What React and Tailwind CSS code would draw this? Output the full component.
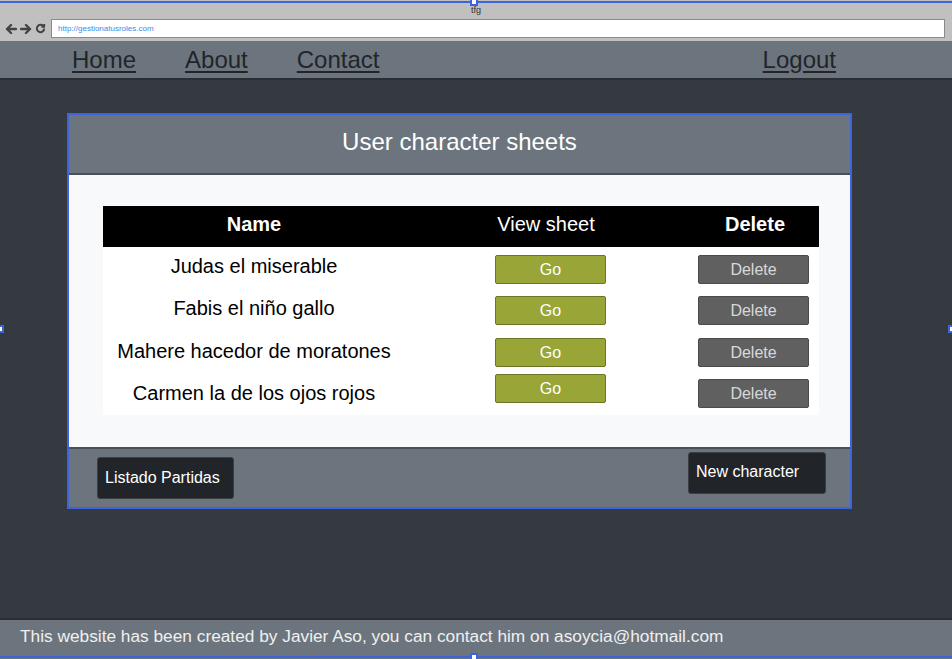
import React from "react";

const characters = [
  { name: "Judas el miserable", go: "mt-[8px]", del: "mt-[8px]", text: "pt-[4px]" },
  { name: "Fabis el niño gallo", go: "mt-[7px]", del: "mt-[7px]", text: "pt-[4px]" },
  { name: "Mahere hacedor de moratones", go: "mt-[7px]", del: "mt-[7px]", text: "pt-[5px]" },
  { name: "Carmen la de los ojos rojos", go: "mt-[1px]", del: "mt-[6px]", text: "pt-[5px]" },
];

const Handle = ({ className }) => (
  <div className={"absolute w-[8px] h-[8px] bg-white border-2 border-[#3d63dd] " + className} />
);

const App = () => {
  return (
    <div
      className="relative w-[952px] h-[659px] overflow-hidden bg-[#343a40] flex flex-col"
      style={{ fontFamily: '"Liberation Sans", Arial, sans-serif' }}
    >
      {/* selection frame of the mockup */}
      <div className="absolute left-0 right-0 top-[1px] h-[2px] bg-[#3d63dd] z-10" />
      <div className="absolute left-0 right-0 bottom-[1px] h-[2px] bg-[#3d63dd] z-10" />
      <Handle className="left-[470px] -top-[2px] z-20" />
      <Handle className="left-[470px] -bottom-[2px] z-20" />
      <Handle className="-left-[4px] top-[325px] z-20" />
      <Handle className="-right-[4px] top-[325px] z-20" />

      {/* browser chrome */}
      <div className="h-[41px] bg-[#c0c0c0] flex flex-col shrink-0">
        <div className="h-[19px] flex items-end justify-center text-[9px] text-[#333] leading-none pb-[4px]">tfg</div>
        <div className="flex items-center h-[19px]">
          <div className="flex items-center gap-[3px] pl-[5px] w-[51px]">
            <svg width="12" height="12" viewBox="0 0 12 12" fill="none" stroke="#444" strokeWidth="2.4" strokeLinecap="round" strokeLinejoin="round">
              <path d="M11 6H2M6 2L2 6l4 4" />
            </svg>
            <svg width="12" height="12" viewBox="0 0 12 12" fill="none" stroke="#444" strokeWidth="2.4" strokeLinecap="round" strokeLinejoin="round">
              <path d="M1 6h9M6 2l4 4-4 4" />
            </svg>
            <svg width="11" height="11" viewBox="0 0 12 12" fill="none" stroke="#444" strokeWidth="2.2">
              <path d="M10 6a4 4 0 1 1-1.2-2.9" />
              <path d="M10 1v3H7" strokeLinejoin="round" />
            </svg>
          </div>
          <div className="w-[894px] h-[19px] bg-white border border-[#8a8a8a] flex items-center pl-[6px] text-[8px] text-[#3d8be8]">
            http://gestionatusroles.com
          </div>
        </div>
      </div>

      {/* nav */}
      <nav className="h-[39px] bg-[#6c757d] border-b-2 border-[#2a2e33] flex items-center justify-between pl-[72px] pr-[116px] shrink-0">
        <div className="flex items-center gap-[49px] text-[24px] text-[#212529]">
          <a className="underline underline-offset-[3px]">Home</a>
          <a className="underline underline-offset-[3px]">About</a>
          <a className="underline underline-offset-[3px]">Contact</a>
        </div>
        <a className="text-[24px] text-[#212529] underline underline-offset-[3px]">Logout</a>
      </nav>

      {/* main */}
      <main className="flex-1 pt-[33px] pl-[67px]">
        <div className="w-[785px] border-2 border-[#3d63dd] flex flex-col">
          <div className="h-[60px] bg-[#6c757d] border-b-2 border-[#4a5056] flex items-center justify-center pb-[4px] text-[24px] text-white">
            User character sheets
          </div>
          <div className="bg-[#f8f9fa] h-[272px] pt-[31px] pl-[34px]">
            <table className="w-[716px] border-collapse bg-white table-fixed">
              <thead>
                <tr className="bg-black text-white text-[20px] h-[41px]">
                  <th className="w-[302px] font-bold pb-[5px]">Name</th>
                  <th className="w-[282px] font-normal pb-[5px]">View sheet</th>
                  <th className="font-bold pb-[5px] pl-[4px]">Delete</th>
                </tr>
              </thead>
              <tbody>
                {characters.map((c) => (
                  <tr key={c.name} className="h-[42px] align-top">
                    <td className="text-center text-[20px] text-black">
                      <div className={c.text}>{c.name}</div>
                    </td>
                    <td>
                      <button className={"ml-[90px] w-[111px] h-[29px] bg-[#9aa537] border border-[#6c7426] rounded-[2px] text-white text-[16px] " + c.go}>
                        Go
                      </button>
                    </td>
                    <td>
                      <button className={"ml-[11px] w-[111px] h-[29px] bg-[#606060] border border-[#4a4a4a] rounded-[2px] text-[#d8d8d8] text-[16px] " + c.del}>
                        Delete
                      </button>
                    </td>
                  </tr>
                ))}
              </tbody>
            </table>
          </div>
          <div className="h-[60px] bg-[#6c757d] border-t-2 border-[#4a5056] flex items-start justify-between pl-[28px] pr-[24px]">
            <button className="mt-[8px] w-[137px] h-[42px] bg-[#212529] border border-[#3a3f44] rounded-[3px] text-white text-[16px] text-left pl-[7px]">
              Listado Partidas
            </button>
            <button className="mt-[3px] w-[138px] h-[42px] bg-[#212529] border border-[#3a3f44] rounded-[3px] text-white text-[16px] text-left pl-[7px] pb-[2px]">
              New character
            </button>
          </div>
        </div>
      </main>

      {/* footer */}
      <footer className="h-[41px] bg-[#6c757d] border-t-2 border-[#2a2e33] flex items-center pl-[20px] pb-[5px] text-[17.3px] text-[#f0f0f0] shrink-0">
        This website has been created by Javier Aso, you can contact him on asoycia@hotmail.com
      </footer>
    </div>
  );
};

export default App;
